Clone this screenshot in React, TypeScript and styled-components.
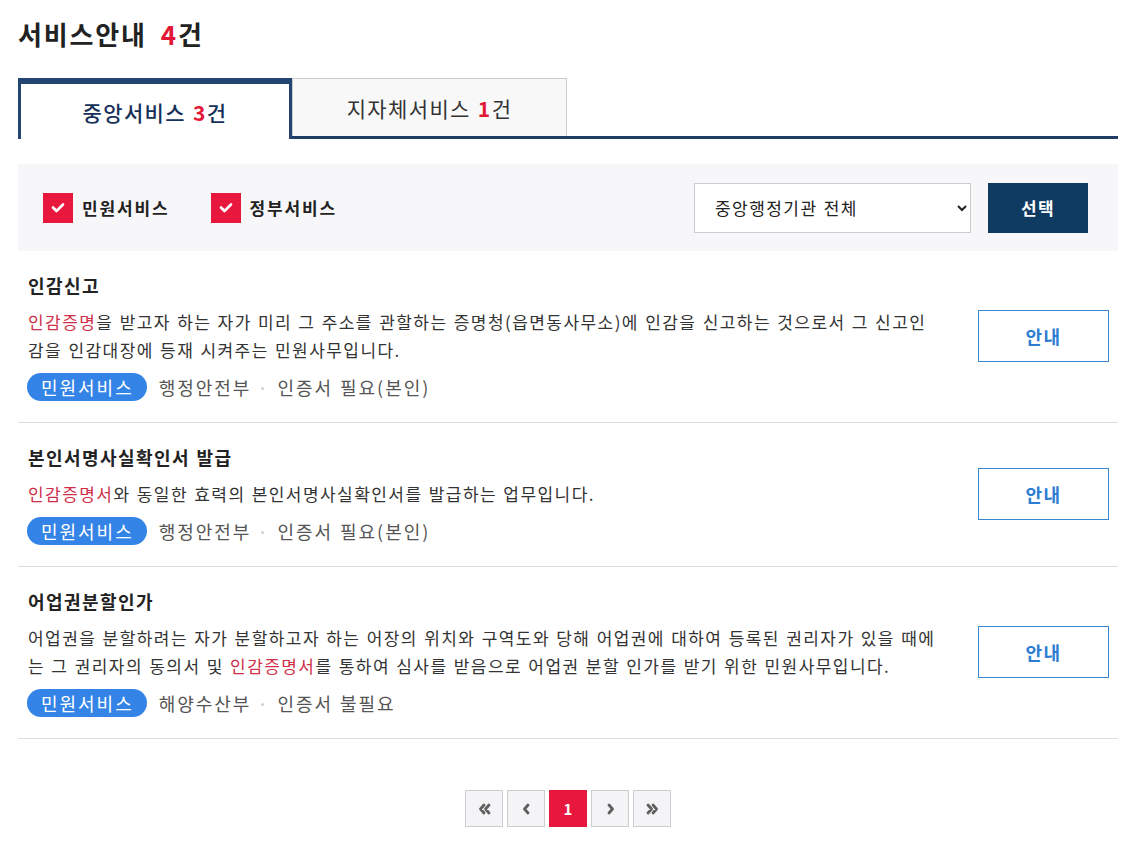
import React from "react";
import styled, { createGlobalStyle } from "styled-components";

const Global = createGlobalStyle`
  html, body { margin: 0; padding: 0; background: #fff; }
  body {
    font-family: "Noto Sans CJK KR", "Noto Sans", sans-serif;
    color: #222;
    letter-spacing: 0.09em;
    word-spacing: 1px;
  }
  * { box-sizing: border-box; }
  button, select { letter-spacing: inherit; word-spacing: inherit; }
`;

const Page = styled.div`
  width: 1100px;
  margin: 0 0 0 18px;
  padding-bottom: 16px;
`;

const Title = styled.h2`
  margin: 16px 0 26px;
  font-size: 26px;
  line-height: 36px;
  font-weight: 700;
  color: #222;
  letter-spacing: 0.07em;
`;

const Red = styled.span<{ $gap?: boolean }>`
  color: #e31837;
  font-weight: 700;
  margin-left: ${(p) => (p.$gap ? "14px" : "0")};
`;

const TabList = styled.div`
  display: flex;
  border-bottom: 3px solid #1f3c64;
  height: 61px;
`;

const Tab = styled.button<{ $active?: boolean }>`
  all: unset;
  box-sizing: border-box;
  width: ${(p) => (p.$active ? "274px" : "275px")};
  display: flex;
  align-items: center;
  justify-content: center;
  font-family: inherit;
  font-size: 21px;
  letter-spacing: 0.065em;
  cursor: pointer;
  ${(p) =>
    p.$active
      ? `
    height: 61px;
    background: #fff;
    border: 3px solid #244572;
    border-top-width: 6px;
    border-bottom: none;
    color: #16305a;
    font-weight: 500;
    padding-top: 1px;
  `
      : `
    height: 58px;
    background: #f8f8f8;
    border: 1px solid #cccccc;
    border-bottom: none;
    color: #333;
    font-weight: 400;
  `}
`;

const Filter = styled.div`
  margin-top: 25px;
  height: 87px;
  background: #f7f7f9;
  display: flex;
  align-items: center;
  padding: 0 30px 0 25px;
`;

const CheckGroup = styled.label`
  display: flex;
  align-items: center;
  gap: 9px;
  margin-right: 41px;
  font-size: 17px;
  font-weight: 700;
  letter-spacing: 0.11em;
  color: #222;
  cursor: pointer;
`;

const CheckBox = styled.span`
  width: 30px;
  height: 30px;
  background: #e8173d;
  display: flex;
  align-items: center;
  justify-content: center;
`;

const Spacer = styled.div`
  flex: 1;
`;

const Select = styled.select`
  width: 277px;
  height: 50px;
  border: 1px solid #cccccc;
  background: #fff;
  padding: 0 12px 0 16px;
  font-family: inherit;
  font-size: 17px;
  color: #222;
  border-radius: 0;
`;

const SelectBtn = styled.button`
  margin-left: 17px;
  width: 100px;
  height: 50px;
  border: none;
  background: #0f3a62;
  color: #fff;
  font-family: inherit;
  font-size: 17px;
  font-weight: 700;
`;

const Item = styled.div`
  display: flex;
  align-items: center;
  justify-content: space-between;
  padding: 20px 9px 21px 10px;
  border-bottom: 1px solid #dedede;
`;

const ItemBody = styled.div`
  width: 912px;
`;

const ItemTitle = styled.div`
  font-size: 18px;
  line-height: 28px;
  font-weight: 700;
  color: #222;
`;

const Desc = styled.div`
  margin-top: 9px;
  font-size: 17px;
  line-height: 28px;
  color: #333;
`;

const Hl = styled.span`
  color: #cf2f48;
`;

const Tags = styled.div`
  margin-top: 9px;
  display: flex;
  align-items: center;
  height: 28px;
  font-size: 18px;
  letter-spacing: 0.11em;
  color: #555;
`;

const Badge = styled.span`
  height: 28px;
  line-height: 28px;
  padding: 0 13px 0 14px;
  margin-left: -1px;
  border-radius: 14px;
  background: #3384e6;
  color: #fff;
  margin-right: 12px;
`;

const Sep = styled.span`
  width: 3px;
  height: 3px;
  border-radius: 50%;
  background: #d0d0d0;
  margin: 2px 13px 0 10px;
`;

const GuideBtn = styled.button`
  width: 131px;
  height: 52px;
  border: 1px solid #3b88d2;
  background: #fff;
  color: #2c7dd2;
  font-family: inherit;
  font-size: 18px;
  font-weight: 700;
  flex-shrink: 0;
`;

const Pager = styled.div`
  margin-top: 51px;
  display: flex;
  justify-content: center;
  gap: 4px;
`;

const PageBtn = styled.button<{ $active?: boolean }>`
  width: 38px;
  height: 37px;
  padding: 0;
  display: flex;
  align-items: center;
  justify-content: center;
  border: 1px solid ${(p) => (p.$active ? "#e8173d" : "#cccccc")};
  background: ${(p) => (p.$active ? "#e8173d" : "#f4f4f6")};
  color: ${(p) => (p.$active ? "#fff" : "#666")};
  font-family: inherit;
  font-size: 15px;
  font-weight: 700;
  letter-spacing: 0;
`;

const Check = () => (
  <svg width="14" height="11" viewBox="0 0 14 11">
    <path d="M2 5.5 L5.5 9 L12 2.5" fill="none" stroke="#fff" strokeWidth="2.6" strokeLinecap="round" strokeLinejoin="round" />
  </svg>
);

const CHEV: Record<string, string> = {
  l: "M7 3 L3.5 7 L7 11",
  r: "M4 3 L7.5 7 L4 11",
  ll: "M7 3 L3.5 7 L7 11 M12 3 L8.5 7 L12 11",
  rr: "M3 3 L6.5 7 L3 11 M8 3 L11.5 7 L8 11",
};

const Chev = ({ kind }: { kind: "l" | "r" | "ll" | "rr" }) => {
  const wide = kind.length === 2;
  return (
    <svg width={wide ? 15 : 11} height="14" viewBox={wide ? "0 0 15 14" : "0 0 11 14"}>
      <path d={CHEV[kind]} fill="none" stroke="#5f5f5f" strokeWidth="2.8" strokeLinecap="round" strokeLinejoin="round" />
    </svg>
  );
};

type Row = {
  title: string;
  desc: React.ReactNode;
  org: string;
  cert: string;
};

const rows: Row[] = [
  {
    title: "인감신고",
    desc: (
      <>
        <Hl>인감증명</Hl>을 받고자 하는 자가 미리 그 주소를 관할하는 증명청(읍면동사무소)에 인감을 신고하는 것으로서 그 신고인감을 인감대장에 등재 시켜주는 민원사무입니다.
      </>
    ),
    org: "행정안전부",
    cert: "인증서 필요(본인)",
  },
  {
    title: "본인서명사실확인서 발급",
    desc: (
      <>
        <Hl>인감증명서</Hl>와 동일한 효력의 본인서명사실확인서를 발급하는 업무입니다.
      </>
    ),
    org: "행정안전부",
    cert: "인증서 필요(본인)",
  },
  {
    title: "어업권분할인가",
    desc: (
      <>
        어업권을 분할하려는 자가 분할하고자 하는 어장의 위치와 구역도와 당해 어업권에 대하여 등록된 권리자가 있을 때에는 그 권리자의 동의서 및 <Hl>인감증명서</Hl>를 통하여 심사를 받음으로 어업권 분할 인가를 받기 위한 민원사무입니다.
      </>
    ),
    org: "해양수산부",
    cert: "인증서 불필요",
  },
];

export default function App() {
  return (
    <>
      <Global />
      <Page>
        <Title>
          서비스안내<Red $gap>4</Red>건
        </Title>
        <TabList>
          <Tab $active>
            중앙서비스&nbsp;<Red>3</Red>건
          </Tab>
          <Tab>
            지자체서비스&nbsp;<Red>1</Red>건
          </Tab>
        </TabList>
        <Filter>
          <CheckGroup>
            <CheckBox>
              <Check />
            </CheckBox>
            민원서비스
          </CheckGroup>
          <CheckGroup>
            <CheckBox>
              <Check />
            </CheckBox>
            정부서비스
          </CheckGroup>
          <Spacer />
          <Select defaultValue="all">
            <option value="all">중앙행정기관 전체</option>
          </Select>
          <SelectBtn>선택</SelectBtn>
        </Filter>
        {rows.map((r) => (
          <Item key={r.title}>
            <ItemBody>
              <ItemTitle>{r.title}</ItemTitle>
              <Desc>{r.desc}</Desc>
              <Tags>
                <Badge>민원서비스</Badge>
                {r.org}
                <Sep />
                {r.cert}
              </Tags>
            </ItemBody>
            <GuideBtn>안내</GuideBtn>
          </Item>
        ))}
        <Pager>
          <PageBtn aria-label="first">
            <Chev kind="ll" />
          </PageBtn>
          <PageBtn aria-label="prev">
            <Chev kind="l" />
          </PageBtn>
          <PageBtn $active>1</PageBtn>
          <PageBtn aria-label="next">
            <Chev kind="r" />
          </PageBtn>
          <PageBtn aria-label="last">
            <Chev kind="rr" />
          </PageBtn>
        </Pager>
      </Page>
    </>
  );
}
